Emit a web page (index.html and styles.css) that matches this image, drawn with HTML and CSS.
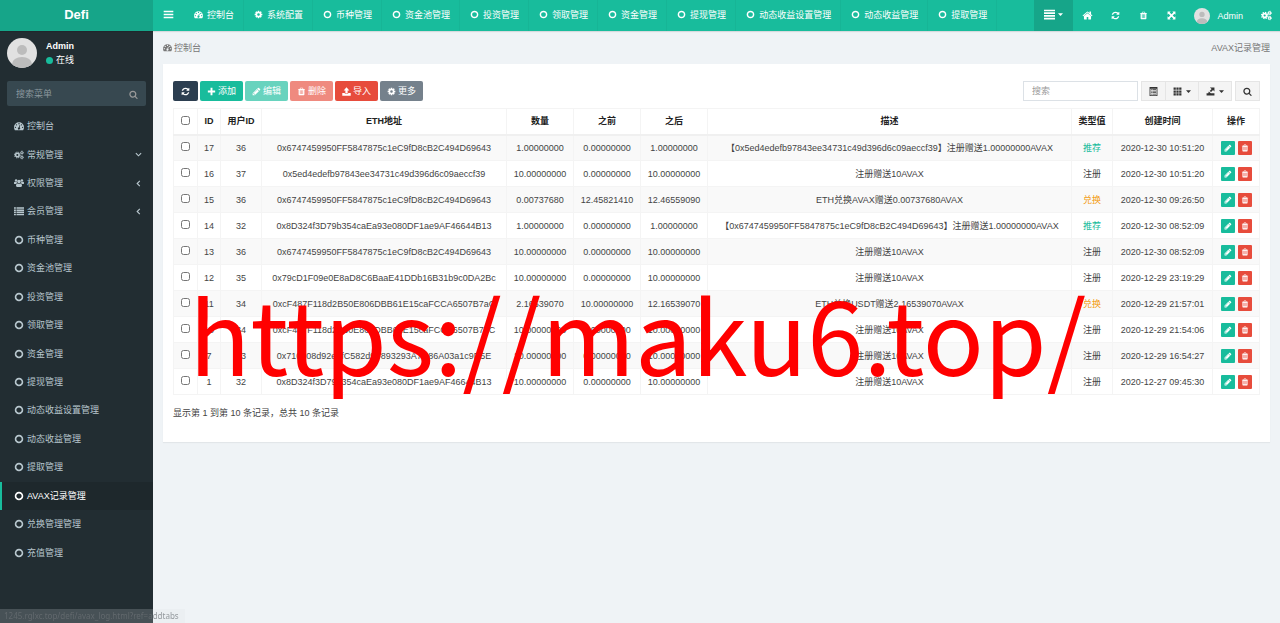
FILE: index.html
```html
<!DOCTYPE html>
<html lang="zh-CN">
  <head>
    <meta charset="UTF-8" />
    <meta name="viewport" content="width=device-width, initial-scale=1.0" />
    <title>AVAX记录管理 - Defi</title>
    <link rel="stylesheet" href="styles.css">
  </head>
  <body>
    <!-- Icon set -->
    <svg class="sprite" aria-hidden="true">
      <symbol id="i-trash" viewBox="0 0 1792 1792"><path d="M704 1376v-704q0-14-9-23t-23-9h-64q-14 0-23 9t-9 23v704q0 14 9 23t23 9h64q14 0 23-9t9-23zm256 0v-704q0-14-9-23t-23-9h-64q-14 0-23 9t-9 23v704q0 14 9 23t23 9h64q14 0 23-9t9-23zm256 0v-704q0-14-9-23t-23-9h-64q-14 0-23 9t-9 23v704q0 14 9 23t23 9h64q14 0 23-9t9-23zm-544-992h448l-48-117q-7-9-17-11h-317q-10 2-17 11zm928 32v64q0 14-9 23t-23 9h-96v948q0 83-47 143.5t-113 60.5h-832q-66 0-113-58.5t-47-141.5v-952h-96q-14 0-23-9t-9-23v-64q0-14 9-23t23-9h309l70-167q15-37 54-63t79-26h320q40 0 79 26t54 63l70 167h309q14 0 23 9t9 23z"/></symbol>
      <symbol id="i-pencil" viewBox="0 0 1792 1792"><path d="M491 1536l91-91-235-235-91 91v107h128v128h107zm523-928q0-22-22-22-10 0-17 7l-542 542q-7 7-7 17 0 22 22 22 10 0 17-7l542-542q7-7 7-17zm-54-192l416 416-832 832h-416v-416zm683 96q0 53-37 90l-166 166-416-416 166-165q36-38 90-38 53 0 91 38l235 234q37 39 37 91z"/></symbol>
      <symbol id="i-refresh" viewBox="0 0 1792 1792"><path d="M1639 1056q0 5-1 7-64 268-268 434.5t-478 166.5q-146 0-282.5-55t-243.5-157l-129 129q-19 19-45 19t-45-19-19-45v-448q0-26 19-45t45-19h448q26 0 45 19t19 45-19 45l-137 137q71 66 161 102t187 36q134 0 250-65t186-179q11-17 53-117 8-23 30-23h192q13 0 22.5 9.5t9.5 22.5zm25-800v448q0 26-19 45t-45 19h-448q-26 0-45-19t-19-45 19-45l138-138q-148-137-349-137-134 0-250 65t-186 179q-11 17-53 117-8 23-30 23h-199q-13 0-22.5-9.5t-9.5-22.5v-7q65-268 270-434.5t480-166.5q146 0 284 55.5t245 156.5l130-129q19-19 45-19t45 19 19 45z"/></symbol>
      <symbol id="i-search" viewBox="0 0 1792 1792"><path d="M1216 832q0-185-131.5-316.5t-316.5-131.5-316.5 131.5-131.5 316.5 131.5 316.5 316.5 131.5 316.5-131.5 131.5-316.5zm512 832q0 52-38 90t-90 38q-54 0-90-38l-343-342q-179 124-399 124-143 0-273.5-55.5t-225-150-150-225-55.5-273.5 55.5-273.5 150-225 225-150 273.5-55.5 273.5 55.5 225 150 150 225 55.5 273.5q0 220-124 399l343 343q37 37 37 90z"/></symbol>
      <symbol id="i-cog" viewBox="0 0 1792 1792"><path d="M1152 896q0-106-75-181t-181-75-181 75-75 181 75 181 181 75 181-75 75-181zm512-109v222q0 12-8 23t-20 13l-185 28q-19 54-39 91 35 50 107 138 10 12 10 25t-9 23q-27 37-99 108t-94 71q-12 0-26-9l-138-108q-44 23-91 38-16 136-29 186-7 28-36 28h-222q-14 0-24.5-8.5t-11.5-21.5l-28-184q-49-16-90-37l-141 107q-10 9-25 9-14 0-25-11-126-114-165-168-7-10-7-23 0-12 8-23 15-21 51-66.5t54-70.5q-27-50-41-99l-183-27q-13-2-21-12.5t-8-23.5v-222q0-12 8-23t19-13l186-28q14-46 39-92-40-57-107-138-10-12-10-24 0-10 9-23 26-36 98.5-107.5t94.5-71.5q13 0 26 10l138 107q44-23 91-38 16-136 29-186 7-28 36-28h222q14 0 24.5 8.5t11.5 21.5l28 184q49 16 90 37l142-107q9-9 24-9 13 0 25 10 129 119 165 170 7 8 7 22 0 12-8 23-15 21-51 66.5t-54 70.5q26 50 41 98l183 28q13 2 21 12.5t8 23.5z"/></symbol>
      <symbol id="i-home" viewBox="0 0 1792 1792"><path d="M1472 992v480q0 26-19 45t-45 19h-384v-384h-256v384h-384q-26 0-45-19t-19-45v-480q0-1 .5-3t.5-3l575-474 575 474q1 2 1 6zm223-69l-62 74q-8 9-21 11h-3q-13 0-21-7l-692-577-692 577q-12 8-24 7-13-2-21-11l-62-74q-8-10-7-23.5t11-21.5l719-599q32-26 76-26t76 26l244 204v-195q0-14 9-23t23-9h192q14 0 23 9t9 23v408l219 182q10 8 11 21.5t-7 23.5z"/></symbol>
      <symbol id="i-cogs" viewBox="0 0 18 16"><g fill="none" stroke="currentColor"><circle cx="6" cy="8" r="3.2" stroke-width="2.8"/><circle cx="6" cy="8" r="5.2" stroke-width="1.8" stroke-dasharray="2.2 1.88"/><circle cx="14.2" cy="3.8" r="1.9" stroke-width="1.8"/><circle cx="14.2" cy="3.8" r="3" stroke-width="1.1" stroke-dasharray="1.5 1.2"/><circle cx="14.2" cy="12.2" r="1.9" stroke-width="1.8"/><circle cx="14.2" cy="12.2" r="3" stroke-width="1.1" stroke-dasharray="1.5 1.2"/></g></symbol>
      <symbol id="i-dash" viewBox="0 0 16 16"><path fill-rule="evenodd" d="M8 2a8 8 0 0 1 8 8q0 2.300-1.200 4.300-.2.300-.5.300H1.700q-.3 0-.5-.3Q0 12.300 0 10a8 8 0 0 1 8-8zM2.300 9a1.100 1.100 0 1 0 0 2.200 1.100 1.100 0 0 0 0-2.200zM4 5a1.100 1.100 0 1 0 0 2.200A1.100 1.100 0 0 0 4 5zm4-1.700a1.100 1.100 0 1 0 0 2.200 1.100 1.100 0 0 0 0-2.200zM12 5a1.100 1.100 0 1 0 0 2.200A1.100 1.100 0 0 0 12 5zm1.700 4a1.100 1.100 0 1 0 0 2.200 1.100 1.100 0 0 0 0-2.200zM8.900 6.500l-.9 3.400a1.900 1.900 0 1 0 1.200.4l.9-3.500z"/></symbol>
      <symbol id="i-group" viewBox="0 0 18 16"><circle cx="3.800" cy="3.600" r="2.300"/><circle cx="14.200" cy="3.600" r="2.300"/><circle cx="9" cy="5.400" r="3.100"/><path d="M0 9V7.500Q0 5.800 1.600 5.600q1.400.8 3.300.4.200 1.700 1 2.500Q4.300 8.600 3.500 10H1.600Q0 10 0 9zM18 9V7.500q0-1.700-1.600-1.900-1.400.8-3.300.4-.2 1.700-1 2.500 1.600.1 2.400 1.500h1.900Q18 10 18 9zM3.500 13q0-4 2.800-4.300 2.700 1.700 5.400 0 2.800.3 2.800 4.300 0 2-2.200 2H5.700q-2.200 0-2.200-2z"/></symbol>
      <symbol id="i-list" viewBox="0 0 16 16"><path d="M0 2h3v2.400H0zM4 2h12v2.400H4zM0 5.400h3v2.400H0zM4 5.400h12v2.400H4zM0 8.800h3v2.400H0zM4 8.800h12v2.400H4zM0 12.200h3v2.400H0zM4 12.200h12v2.400H4z"/></symbol>
      <symbol id="i-circle" viewBox="0 0 16 16"><circle cx="8" cy="8" r="5.500" fill="none" stroke="currentColor" stroke-width="2.600"/></symbol>
      <symbol id="i-bars" viewBox="0 0 16 16"><path d="M1 2.500h14v2.400H1zM1 6.800h14v2.400H1zM1 11.100h14v2.400H1z"/></symbol>
      <symbol id="i-justify" viewBox="0 0 16 16"><path d="M0 1h16v2.400H0zM0 4.900h16v2.400H0zM0 8.800h16v2.400H0zM0 12.700h16v2.400H0z"/></symbol>
      <symbol id="i-expand" viewBox="0 0 16 16"><path d="M1 1h5.500L4.800 2.700 8 5.900l3.200-3.200L9.500 1H15v5.500l-1.700-1.700L10.100 8l3.200 3.200L15 9.500V15H9.500l1.700-1.700L8 10.100l-3.200 3.200L6.500 15H1V9.500l1.700 1.700L5.900 8 2.700 4.800 1 6.500z"/></symbol>
      <symbol id="i-plus" viewBox="0 0 16 16"><path d="M6.300 1.500h3.400v4.800h4.800v3.400H9.700v4.800H6.300V9.700H1.500V6.300h4.800z"/></symbol>
      <symbol id="i-upload" viewBox="0 0 16 16"><path d="M8 .5l5 5.500h-3v5H6V6H3zM.5 10.500H5V12h6v-1.500h4.500v5H.5z"/></symbol>
      <symbol id="i-detail" viewBox="0 0 16 16"><path fill-rule="evenodd" d="M1 0h14v16H1zM2.500 3v11.500h11V3zM3.500 4.200H5v1.300H3.500zM6 4.200h6.500v1.300H6zM3.500 6.800H5v1.300H3.500zM6 6.800h6.500v1.300H6zM3.500 9.400H5v1.300H3.500zM6 9.400h6.500v1.300H6zM3.500 12H5v1.300H3.500zM6 12h6.500v1.300H6z"/></symbol>
      <symbol id="i-grid" viewBox="0 0 16 16"><path d="M1 1h4v4H1zM6 1h4v4H6zM11 1h4v4h-4zM1 6h4v4H1zM6 6h4v4H6zM11 6h4v4h-4zM1 11h4v4H1zM6 11h4v4H6zM11 11h4v4h-4z"/></symbol>
      <symbol id="i-export" viewBox="0 0 16 16"><path d="M7 1h8v7l-2.500-2.500L9 9 6.500 7 10 3.500zM1 11h3l1-3 3.500 3H15v4H1z"/></symbol>
      <symbol id="i-caret" viewBox="0 0 8 8"><path d="M0 2h8L4 6.500z"/></symbol>
      <symbol id="i-down" viewBox="0 0 8 8"><path d="M1 2.500l3 3 3-3" fill="none" stroke="currentColor" stroke-width="1.300"/></symbol>
      <symbol id="i-left" viewBox="0 0 8 8"><path d="M5.500 1l-3 3 3 3" fill="none" stroke="currentColor" stroke-width="1.300"/></symbol>
      <symbol id="i-avatar" viewBox="0 0 30 30"><clipPath id="face"><circle cx="15" cy="15" r="15"/></clipPath><g clip-path="url(#face)"><path fill="#e1e1e1" d="M0 0h30v30H0z"/><circle cx="15" cy="12" r="5" fill="#bcbcbc"/><ellipse cx="15" cy="26" rx="10" ry="7" fill="#bcbcbc"/></g></symbol>
    </svg>

    <!-- Header -->
    <header class="header">
      <a href="#" class="logo">Defi</a>
      <button type="button" class="nav-toggle" aria-label="切换菜单"><svg class="icon icon-md"><use href="#i-bars"/></svg></button>
      <nav class="nav-tabs">
        <a href="#"><svg class="icon"><use href="#i-dash"/></svg>控制台</a>
        <a href="#"><svg class="icon"><use href="#i-cog"/></svg>系统配置</a>
        <a href="#"><svg class="icon"><use href="#i-circle"/></svg>币种管理</a>
        <a href="#"><svg class="icon"><use href="#i-circle"/></svg>资金池管理</a>
        <a href="#"><svg class="icon"><use href="#i-circle"/></svg>投资管理</a>
        <a href="#"><svg class="icon"><use href="#i-circle"/></svg>领取管理</a>
        <a href="#"><svg class="icon"><use href="#i-circle"/></svg>资金管理</a>
        <a href="#"><svg class="icon"><use href="#i-circle"/></svg>提现管理</a>
        <a href="#"><svg class="icon"><use href="#i-circle"/></svg>动态收益设置管理</a>
        <a href="#"><svg class="icon"><use href="#i-circle"/></svg>动态收益管理</a>
        <a href="#"><svg class="icon"><use href="#i-circle"/></svg>提取管理</a>
      </nav>
      <div class="nav-right">
        <button type="button" class="nav-more" aria-label="更多标签"><svg class="icon icon-md"><use href="#i-justify"/></svg><svg class="caret"><use href="#i-caret"/></svg></button>
        <a href="#" class="nav-icon" aria-label="主页"><svg class="icon icon-md"><use href="#i-home"/></svg></a>
        <a href="#" class="nav-icon" aria-label="刷新"><svg class="icon"><use href="#i-refresh"/></svg></a>
        <a href="#" class="nav-icon" aria-label="清除缓存"><svg class="icon"><use href="#i-trash"/></svg></a>
        <a href="#" class="nav-icon" aria-label="全屏"><svg class="icon"><use href="#i-expand"/></svg></a>
        <a href="#" class="nav-user"><svg class="avatar-sm"><use href="#i-avatar"/></svg>Admin</a>
        <a href="#" class="nav-icon" aria-label="设置"><svg class="icon icon-md"><use href="#i-cogs"/></svg></a>
      </div>
    </header>

    <div class="wrapper">
      <!-- Sidebar -->
      <aside class="sidebar">
        <div class="user-panel">
          <svg class="avatar"><use href="#i-avatar"/></svg>
          <div class="user-info">
            <strong>Admin</strong>
            <a href="#"><span class="dot"></span>在线</a>
          </div>
        </div>
        <form class="sidebar-form">
          <input type="text" placeholder="搜索菜单" aria-label="搜索菜单" />
          <button type="button" aria-label="搜索"><svg class="icon"><use href="#i-search"/></svg></button>
        </form>
        <nav class="sidebar-menu">
          <a href="#"><svg class="icon"><use href="#i-dash"/></svg>控制台</a>
          <a href="#"><svg class="icon"><use href="#i-cogs"/></svg>常规管理<svg class="arrow"><use href="#i-down"/></svg></a>
          <a href="#"><svg class="icon"><use href="#i-group"/></svg>权限管理<svg class="arrow"><use href="#i-left"/></svg></a>
          <a href="#"><svg class="icon"><use href="#i-list"/></svg>会员管理<svg class="arrow"><use href="#i-left"/></svg></a>
          <a href="#"><svg class="icon"><use href="#i-circle"/></svg>币种管理</a>
          <a href="#"><svg class="icon"><use href="#i-circle"/></svg>资金池管理</a>
          <a href="#"><svg class="icon"><use href="#i-circle"/></svg>投资管理</a>
          <a href="#"><svg class="icon"><use href="#i-circle"/></svg>领取管理</a>
          <a href="#"><svg class="icon"><use href="#i-circle"/></svg>资金管理</a>
          <a href="#"><svg class="icon"><use href="#i-circle"/></svg>提现管理</a>
          <a href="#"><svg class="icon"><use href="#i-circle"/></svg>动态收益设置管理</a>
          <a href="#"><svg class="icon"><use href="#i-circle"/></svg>动态收益管理</a>
          <a href="#"><svg class="icon"><use href="#i-circle"/></svg>提取管理</a>
          <a href="#" class="active"><svg class="icon"><use href="#i-circle"/></svg>AVAX记录管理</a>
          <a href="#"><svg class="icon"><use href="#i-circle"/></svg>兑换管理管理</a>
          <a href="#"><svg class="icon"><use href="#i-circle"/></svg>充值管理</a>
        </nav>
      </aside>

      <!-- Content -->
      <main class="content">
        <div class="ribbon">
          <a href="#"><svg class="icon"><use href="#i-dash"/></svg>控制台</a>
          <span>AVAX记录管理</span>
        </div>
        <section class="panel">
          <div class="toolbar">
            <button type="button" class="btn btn-primary" aria-label="刷新"><svg class="icon"><use href="#i-refresh"/></svg></button>
            <button type="button" class="btn btn-success"><svg class="icon"><use href="#i-plus"/></svg>添加</button>
            <button type="button" class="btn btn-success" disabled><svg class="icon"><use href="#i-pencil"/></svg>编辑</button>
            <button type="button" class="btn btn-danger" disabled><svg class="icon"><use href="#i-trash"/></svg>删除</button>
            <button type="button" class="btn btn-danger"><svg class="icon"><use href="#i-upload"/></svg>导入</button>
            <button type="button" class="btn btn-more"><svg class="icon"><use href="#i-cog"/></svg>更多</button>
            <div class="toolbar-right">
              <input type="text" class="search-input" placeholder="搜索" aria-label="搜索" />
              <div class="btn-group">
                <button type="button" class="btn-default" aria-label="切换"><svg class="icon"><use href="#i-detail"/></svg></button>
                <button type="button" class="btn-default" aria-label="列"><svg class="icon"><use href="#i-grid"/></svg><svg class="caret"><use href="#i-caret"/></svg></button>
                <button type="button" class="btn-default" aria-label="导出数据"><svg class="icon"><use href="#i-export"/></svg><svg class="caret"><use href="#i-caret"/></svg></button>
              </div>
              <button type="button" class="btn-default" aria-label="普通搜索"><svg class="icon"><use href="#i-search"/></svg></button>
            </div>
          </div>

          <table class="table">
            <colgroup>
              <col class="col-check"><col class="col-id"><col class="col-user"><col class="col-eth">
              <col class="col-num"><col class="col-num"><col class="col-num"><col>
              <col class="col-type"><col class="col-time"><col class="col-act">
            </colgroup>
            <thead>
              <tr>
                <th><input type="checkbox" aria-label="全选" /></th>
                <th>ID</th>
                <th>用户ID</th>
                <th>ETH地址</th>
                <th>数量</th>
                <th>之前</th>
                <th>之后</th>
                <th>描述</th>
                <th>类型值</th>
                <th>创建时间</th>
                <th>操作</th>
              </tr>
            </thead>
            <tbody>
              <tr class="hover">
                <td><input type="checkbox" aria-label="选择 17" /></td>
                <td>17</td><td>36</td><td>0x6747459950FF5847875c1eC9fD8cB2C494D69643</td>
                <td>1.00000000</td><td>0.00000000</td><td>1.00000000</td>
                <td>【0x5ed4edefb97843ee34731c49d396d6c09aeccf39】注册赠送1.00000000AVAX</td>
                <td><span class="text-success">推荐</span></td><td>2020-12-30 10:51:20</td>
                <td><div class="actions"><button type="button" class="btn-xs edit" aria-label="编辑"><svg><use href="#i-pencil"/></svg></button><button type="button" class="btn-xs del" aria-label="删除"><svg><use href="#i-trash"/></svg></button></div></td>
              </tr>
              <tr>
                <td><input type="checkbox" aria-label="选择 16" /></td>
                <td>16</td><td>37</td><td>0x5ed4edefb97843ee34731c49d396d6c09aeccf39</td>
                <td>10.00000000</td><td>0.00000000</td><td>10.00000000</td>
                <td>注册赠送10AVAX</td>
                <td>注册</td><td>2020-12-30 10:51:20</td>
                <td><div class="actions"><button type="button" class="btn-xs edit" aria-label="编辑"><svg><use href="#i-pencil"/></svg></button><button type="button" class="btn-xs del" aria-label="删除"><svg><use href="#i-trash"/></svg></button></div></td>
              </tr>
              <tr>
                <td><input type="checkbox" aria-label="选择 15" /></td>
                <td>15</td><td>36</td><td>0x6747459950FF5847875c1eC9fD8cB2C494D69643</td>
                <td>0.00737680</td><td>12.45821410</td><td>12.46559090</td>
                <td>ETH兑换AVAX赠送0.00737680AVAX</td>
                <td><span class="text-warning">兑换</span></td><td>2020-12-30 09:26:50</td>
                <td><div class="actions"><button type="button" class="btn-xs edit" aria-label="编辑"><svg><use href="#i-pencil"/></svg></button><button type="button" class="btn-xs del" aria-label="删除"><svg><use href="#i-trash"/></svg></button></div></td>
              </tr>
              <tr>
                <td><input type="checkbox" aria-label="选择 14" /></td>
                <td>14</td><td>32</td><td>0x8D324f3D79b354caEa93e080DF1ae9AF46644B13</td>
                <td>1.00000000</td><td>0.00000000</td><td>1.00000000</td>
                <td>【0x6747459950FF5847875c1eC9fD8cB2C494D69643】注册赠送1.00000000AVAX</td>
                <td><span class="text-success">推荐</span></td><td>2020-12-30 08:52:09</td>
                <td><div class="actions"><button type="button" class="btn-xs edit" aria-label="编辑"><svg><use href="#i-pencil"/></svg></button><button type="button" class="btn-xs del" aria-label="删除"><svg><use href="#i-trash"/></svg></button></div></td>
              </tr>
              <tr>
                <td><input type="checkbox" aria-label="选择 13" /></td>
                <td>13</td><td>36</td><td>0x6747459950FF5847875c1eC9fD8cB2C494D69643</td>
                <td>10.00000000</td><td>0.00000000</td><td>10.00000000</td>
                <td>注册赠送10AVAX</td>
                <td>注册</td><td>2020-12-30 08:52:09</td>
                <td><div class="actions"><button type="button" class="btn-xs edit" aria-label="编辑"><svg><use href="#i-pencil"/></svg></button><button type="button" class="btn-xs del" aria-label="删除"><svg><use href="#i-trash"/></svg></button></div></td>
              </tr>
              <tr>
                <td><input type="checkbox" aria-label="选择 12" /></td>
                <td>12</td><td>35</td><td>0x79cD1F09e0E8aD8C6BaaE41DDb16B31b9c0DA2Bc</td>
                <td>10.00000000</td><td>0.00000000</td><td>10.00000000</td>
                <td>注册赠送10AVAX</td>
                <td>注册</td><td>2020-12-29 23:19:29</td>
                <td><div class="actions"><button type="button" class="btn-xs edit" aria-label="编辑"><svg><use href="#i-pencil"/></svg></button><button type="button" class="btn-xs del" aria-label="删除"><svg><use href="#i-trash"/></svg></button></div></td>
              </tr>
              <tr>
                <td><input type="checkbox" aria-label="选择 11" /></td>
                <td>11</td><td>34</td><td>0xcF487F118d2B50E806DBB61E15caFCCA6507B7aC</td>
                <td>2.16539070</td><td>10.00000000</td><td>12.16539070</td>
                <td>ETH兑换USDT赠送2.16539070AVAX</td>
                <td><span class="text-warning">兑换</span></td><td>2020-12-29 21:57:01</td>
                <td><div class="actions"><button type="button" class="btn-xs edit" aria-label="编辑"><svg><use href="#i-pencil"/></svg></button><button type="button" class="btn-xs del" aria-label="删除"><svg><use href="#i-trash"/></svg></button></div></td>
              </tr>
              <tr>
                <td><input type="checkbox" aria-label="选择 10" /></td>
                <td>10</td><td>34</td><td>0xcF487F118d2B50E806DBB61E15caFCCA6507B7aC</td>
                <td>10.00000000</td><td>0.00000000</td><td>10.00000000</td>
                <td>注册赠送10AVAX</td>
                <td>注册</td><td>2020-12-29 21:54:06</td>
                <td><div class="actions"><button type="button" class="btn-xs edit" aria-label="编辑"><svg><use href="#i-pencil"/></svg></button><button type="button" class="btn-xs del" aria-label="删除"><svg><use href="#i-trash"/></svg></button></div></td>
              </tr>
              <tr>
                <td><input type="checkbox" aria-label="选择 7" /></td>
                <td>7</td><td>33</td><td>0x710908d92e1fC582d9F893293A7C86A03a1c9D5E</td>
                <td>10.00000000</td><td>0.00000000</td><td>10.00000000</td>
                <td>注册赠送10AVAX</td>
                <td>注册</td><td>2020-12-29 16:54:27</td>
                <td><div class="actions"><button type="button" class="btn-xs edit" aria-label="编辑"><svg><use href="#i-pencil"/></svg></button><button type="button" class="btn-xs del" aria-label="删除"><svg><use href="#i-trash"/></svg></button></div></td>
              </tr>
              <tr>
                <td><input type="checkbox" aria-label="选择 1" /></td>
                <td>1</td><td>32</td><td>0x8D324f3D79b354caEa93e080DF1ae9AF46644B13</td>
                <td>10.00000000</td><td>0.00000000</td><td>10.00000000</td>
                <td>注册赠送10AVAX</td>
                <td>注册</td><td>2020-12-27 09:45:30</td>
                <td><div class="actions"><button type="button" class="btn-xs edit" aria-label="编辑"><svg><use href="#i-pencil"/></svg></button><button type="button" class="btn-xs del" aria-label="删除"><svg><use href="#i-trash"/></svg></button></div></td>
              </tr>
            </tbody>
          </table>
          <p class="pagination-detail">显示第 1 到第 10 条记录，总共 10 条记录</p>
        </section>
      </main>
    </div>

    <div class="watermark">https://maku6.top/</div>
    <div class="status-bar">1245.rglxc.top/defi/avax_log.html?ref=addtabs</div>
  </body>
</html>
```
FILE: styles.css
```css
* {
  margin: 0;
  padding: 0;
  box-sizing: border-box;
}

:root {
  --primary: #2c3e50;
  --success: #18bc9c;
  --success-dark: #16a589;
  --danger: #e74c3c;
  --sidebar: #222d32;
  --background: #eff3f6;
  --text: #444444;
}

body {
  min-height: 100vh;
  display: flex;
  flex-direction: column;
  background: var(--background);
  color: var(--text);
  font-family: "Liberation Sans", "Noto Sans CJK SC", sans-serif;
  font-size: 9px;
  line-height: 14px;
}

a {
  color: inherit;
  text-decoration: none;
}

button,
input {
  font: inherit;
  color: inherit;
}

button {
  border: none;
  background: none;
  cursor: pointer;
}

.sprite {
  position: absolute;
  width: 0;
  height: 0;
}

.icon {
  width: 9px;
  height: 9px;
  flex: none;
  fill: currentColor;
}

.icon-md {
  width: 11px;
  height: 11px;
}

.caret {
  width: 5px;
  height: 5px;
  fill: currentColor;
}

/* Header */
.header {
  height: 31px;
  display: flex;
  background: var(--success);
  color: white;
  box-shadow: 0 1px 1px rgba(0, 0, 0, 0.1);
  z-index: 10;
}

.logo {
  width: 153px;
  flex: none;
  background: var(--success-dark);
  font-size: 13px;
  font-weight: 700;
  line-height: 30px;
  text-align: center;
}

.nav-toggle {
  width: 31px;
  flex: none;
  display: flex;
  align-items: center;
  justify-content: center;
  padding-bottom: 2px;
}

.nav-tabs {
  flex: 1;
  display: flex;
  overflow: hidden;
}

.nav-tabs a {
  display: flex;
  align-items: center;
  gap: 4px;
  padding: 0 9px 2px 10px;
  border-right: 1px solid #17b596;
  white-space: nowrap;
}

.nav-right {
  display: flex;
}

.nav-more {
  width: 39px;
  display: flex;
  align-items: center;
  justify-content: center;
  gap: 3px;
  padding-bottom: 2px;
  background: var(--success-dark);
}

.nav-icon {
  width: 28px;
  display: flex;
  align-items: center;
  justify-content: center;
}

.nav-user {
  display: flex;
  align-items: center;
  gap: 7px;
  padding: 0 9px;
}

.avatar-sm {
  width: 16px;
  height: 16px;
}

/* Sidebar */
.wrapper {
  flex: 1;
  display: flex;
}

.sidebar {
  width: 153px;
  flex: none;
  background: var(--sidebar);
  color: #b8c7ce;
}

.user-panel {
  display: flex;
  align-items: center;
  gap: 9px;
  padding: 7px;
  color: white;
}

.avatar {
  width: 30px;
  height: 30px;
}

.user-info {
  display: flex;
  flex-direction: column;
}

.user-info a {
  display: flex;
  align-items: center;
  gap: 3px;
}

.dot {
  width: 7px;
  height: 7px;
  border-radius: 50%;
  background: var(--success);
}

.sidebar-form {
  display: flex;
  height: 25px;
  margin: 6px 7px;
  background: #374850;
  border-radius: 2px;
}

.sidebar-form input {
  flex: 1;
  min-width: 0;
  padding: 0 9px;
  border: none;
  background: none;
  outline: none;
}

.sidebar-form input::placeholder {
  color: #8b979d;
}

.sidebar-form button {
  width: 26px;
  color: #999999;
}

.sidebar-form .icon {
  vertical-align: middle;
}

.sidebar-menu {
  display: grid;
  grid-auto-rows: 1fr;
  min-height: 73vh;
}

.sidebar-menu a {
  display: flex;
  align-items: center;
  gap: 3px;
  padding: 0 11px 0 12px;
  border-left: 2px solid transparent;
}

.sidebar-menu .icon {
  width: 10px;
  height: 10px;
}

.sidebar-menu .active {
  background: #1e282c;
  border-left-color: var(--success);
  color: white;
}

.arrow {
  width: 7px;
  height: 7px;
  margin-left: auto;
}

/* Content */
.content {
  flex: 1;
  min-width: 0;
  padding: 0 10px;
}

.ribbon {
  height: 33px;
  display: flex;
  align-items: center;
  justify-content: space-between;
  color: #777777;
}

.ribbon a {
  display: flex;
  align-items: center;
  gap: 2px;
}

.panel {
  padding: 17px 10px 11px;
  background: white;
  box-shadow: 0 1px 1px rgba(0, 0, 0, 0.05);
}

.toolbar {
  display: flex;
  gap: 2px;
  margin-bottom: 7px;
}

.btn {
  height: 20px;
  display: flex;
  align-items: center;
  gap: 2px;
  padding: 0 7px;
  border-radius: 2px;
  color: white;
}

.btn:disabled {
  opacity: 0.65;
}

.btn-primary {
  padding: 0 8px;
  background: var(--primary);
}

.btn-success {
  background: var(--success);
}

.btn-danger {
  background: var(--danger);
}

.btn-more {
  background: #75818c;
}

.toolbar-right {
  display: flex;
  gap: 3px;
  margin-left: auto;
}

.search-input {
  width: 115px;
  height: 20px;
  padding: 0 8px;
  border: 1px solid #dce1e6;
  outline: none;
}

.search-input::placeholder {
  color: #999999;
}

.btn-group {
  display: flex;
}

.btn-group .btn-default + .btn-default {
  border-left: none;
}

.btn-default {
  height: 20px;
  display: flex;
  align-items: center;
  gap: 4px;
  padding: 0 7px;
  border: 1px solid #e5e5e5;
  background: #f4f4f4;
  color: #333333;
}

/* Table */
.table {
  width: 100%;
  table-layout: fixed;
  border-collapse: collapse;
  text-align: center;
}

.col-check {
  width: 24px;
}

.col-id {
  width: 23px;
}

.col-user,
.col-type {
  width: 41px;
}

.col-eth {
  width: 245px;
}

.col-num {
  width: 67px;
}

.col-time {
  width: 100px;
}

.col-act {
  width: 47px;
}

.table th,
.table td {
  height: 26px;
  border: 1px solid #f4f4f4;
  white-space: nowrap;
}

.table th {
  color: #222222;
  border-bottom: 2px solid #f0f0f0;
}

.table tbody tr:nth-child(odd) {
  background: #f9f9f9;
}

.table tbody .hover {
  background: #f4f4f4;
}

.table input {
  width: 9px;
  height: 9px;
  display: block;
  margin: 0 auto 2px;
}

.text-success {
  color: var(--success);
}

.text-warning {
  color: #f39c12;
}

.actions {
  display: flex;
  justify-content: center;
  gap: 3px;
}

.btn-xs {
  width: 14px;
  height: 14px;
  display: flex;
  align-items: center;
  justify-content: center;
  border-radius: 1px;
  color: white;
}

.btn-xs svg {
  width: 8px;
  height: 8px;
  fill: currentColor;
}

.edit {
  background: var(--success);
}

.del {
  background: var(--danger);
}

.pagination-detail {
  padding: 11px 0;
}

/* Overlays */
.watermark {
  position: absolute;
  top: 254px;
  left: 189px;
  color: #ff0000;
  font-family: "Noto Sans CJK SC", sans-serif;
  font-size: 101px;
  line-height: 156px;
  white-space: nowrap;
  pointer-events: none;
}

.status-bar {
  position: fixed;
  bottom: 0;
  left: 0;
  z-index: 20;
  padding: 0 6px 0 4px;
  background: rgba(222, 225, 230, 0.2);
  color: rgba(110, 115, 120, 0.7);
  font-family: "Noto Sans", sans-serif;
  font-size: 8px;
}
```
